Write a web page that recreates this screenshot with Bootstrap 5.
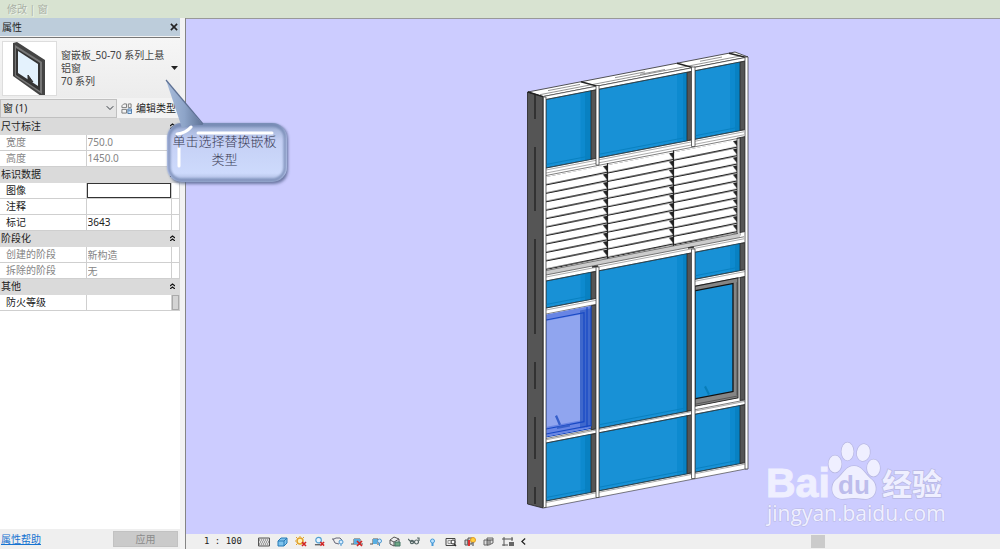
<!DOCTYPE html>
<html lang="zh-CN">
<head>
<meta charset="utf-8">
<meta name="viewport" content="width=device-width, initial-scale=1">
<title>修改 | 窗</title>
<link rel="stylesheet" href="https://cdn.jsdelivr.net/npm/bootstrap@5.3.0/dist/css/bootstrap.min.css">
<style>
  body { font: 10px/13px "Noto Sans", "Noto Sans CJK SC", sans-serif; color: #222; background: #efefef; }
  svg { display: block; }
  .ribbon { background: #d8e3d1; height: 18px; color: #a9b0a5; padding-left: 7px; text-shadow: 1px 1px 0 #eef3ea; }
  .props { width: 186px; background: #f3f3f3; border-right: 1px solid #858585; }
  .props-body { margin-right: 5px; }
  .props-title { background: #bdcddb; height: 18px; padding: 0 2px; }
  .plain-btn { border: 0; background: none; padding: 0; color: inherit; line-height: 1; }
  .type-picker { height: 61px; margin-top: 1px; border: 0; border-top: 1px solid #777; padding: 2px; gap: 4px; color: #444; background: linear-gradient(#f6f6f6, #ececec); text-align: left; }
  .thumb { background: #fff; border: 1px solid #ddd; width: 55px; height: 55px; }
  .filter-row { height: 20px; }
  .filter-row .form-select { width: 117px; height: 19px; font-size: 10px; line-height: 13px; padding: 2px; border: 1px solid #c0c0c0; border-radius: 0; background-color: #e4e4e4; background-size: 8px; background-position: right 2px center; color: #222; }
  .grid-table { table-layout: fixed; width: 100%; border-collapse: collapse; background: #fff; }
  .grid-table tr { height: 16px; }
  .grid-table th, .grid-table td { padding: 0; font-weight: 400; border: 1px solid #cfcfcf; border-width: 0 1px 1px 0; line-height: 14px; }
  .grid-table tbody th { padding-left: 6px; }
  .grid-table .group th { background: #dadada; border-color: #dadada; padding: 0 4px 0 1px; }
  .grid-table input { display: block; width: 100%; height: 15px; border: 0; padding: 0 1px; font: inherit; color: inherit; background: none; }
  .grid-table input.boxed { border: 1px solid #333; }
  .muted-row { color: #858585; }
  .grip { height: 15px; background: #d4d4d4; border: 1px solid #aaa; }
  .props-foot { height: 20px; background: #efefef; padding: 0 2px 0 1px; }
  .apply { width: 65px; height: 16px; background: #cacaca; color: #8b8b8b; border: 1px solid #c2c2c2; padding: 0; font: inherit; }
  .props-foot a { color: #1673d1; }
  .view { background: #ccccff; border-top: 1px solid #999; }
  .status { height: 15px; background: #efefef; padding-left: 18px; }
  .status .scale { font: 9px/13px "DejaVu Sans Mono", monospace; width: 54px; }
  .tools { gap: 7px; }
  .thumb-bar { width: 14px; height: 13px; background: #cbcbcb; margin-right: 175px; }
  .callout-tip { left: 162px; top: 76px; width: 130px; height: 112px; pointer-events: none; }
  .callout-tip p { inset: 57px 11px auto 6px; font: 13px/18px "Liberation Serif", "Noto Sans CJK SC", sans-serif; font-weight: 300; color: #3a3c55; white-space: nowrap; }
</style>
</head>
<body class="vh-100 d-flex flex-column overflow-hidden position-relative">
<header class="ribbon d-flex align-items-center flex-shrink-0">修改 | 窗</header>
<div class="d-flex flex-grow-1" style="min-height:0">
  <aside class="props d-flex flex-column flex-shrink-0">
    <div class="props-body d-flex flex-column flex-grow-1">
      <div class="props-title d-flex align-items-center justify-content-between">
        <span>属性</span>
        <button class="plain-btn" type="button" aria-label="关闭"><svg width="8" height="8" viewBox="0 0 9 9"><path d="M1 1l7 7M8 1L1 8" stroke="#222" stroke-width="1.8"/></svg></button>
      </div>
      <button class="type-picker d-flex align-items-center" type="button">
        <span class="thumb flex-shrink-0"><svg width="53" height="53" viewBox="0 0 53 53"><path d="M10 1l4-1 28 18v35l-4 1-28-20z" fill="#444"/><path d="M12 3l27 17v32L12 34z" fill="#777"/><path d="M13 6l24 15v28L13 33z" fill="#343434"/><path d="M15 9l20 13v22L15 31z" fill="#e4f2fd"/><path d="M25 33l5 7-5-2z" fill="#333" stroke="#333"/></svg></span>
        <span class="flex-grow-1">窗嵌板_50-70 系列上悬铝窗<br>70 系列</span>
        <svg class="flex-shrink-0" width="7" height="4" viewBox="0 0 7 4"><path d="M0 0h7L3.500 4z" fill="#222"/></svg>
      </button>
      <div class="filter-row d-flex align-items-center">
        <select class="form-select" aria-label="窗"><option>窗 (1)</option></select>
        <button class="plain-btn d-flex align-items-center gap-1 ms-1 text-nowrap" type="button"><svg width="11" height="11" viewBox="0 0 12 12" fill="none" stroke="#777"><path d="M3 1h3v4H1V3zM8 1h3v4H8zM1 7h5v4H1z"/><path d="M7.500 6.500h4v5h-4z" fill="#d4e9fb" stroke="#4475aa"/><path d="M8 8.500h3" stroke="#4475aa"/></svg>编辑类型</button>
      </div>
      <table class="grid-table">
        <colgroup><col style="width:86px"><col><col style="width:8px"></colgroup>
        <tbody>
        <tr class="group"><th colspan="3"><div class="d-flex justify-content-between align-items-center">尺寸标注<button class="plain-btn" type="button" aria-label="折叠"><svg width="5" height="6" viewBox="0 0 5 6" fill="none" stroke="#111" stroke-width="1.200"><path d="M0 3l2.500-2L5 3M0 6l2.500-2L5 6"/></svg></button></div></th></tr>
        <tr class="muted-row"><th><label for="w">宽度</label></th><td><input id="w" value="750.0" disabled></td><td></td></tr>
        <tr class="muted-row"><th><label for="h">高度</label></th><td><input id="h" value="1450.0" disabled></td><td></td></tr>
        <tr class="group"><th colspan="3"><div class="d-flex justify-content-between align-items-center">标识数据<button class="plain-btn" type="button" aria-label="折叠"><svg width="5" height="6" viewBox="0 0 5 6" fill="none" stroke="#111" stroke-width="1.200"><path d="M0 3l2.500-2L5 3M0 6l2.500-2L5 6"/></svg></button></div></th></tr>
        <tr><th><label for="img">图像</label></th><td><input id="img" class="boxed"></td><td></td></tr>
        <tr><th><label for="note">注释</label></th><td><input id="note"></td><td></td></tr>
        <tr><th><label for="tag">标记</label></th><td><input id="tag" value="3643"></td><td></td></tr>
        <tr class="group"><th colspan="3"><div class="d-flex justify-content-between align-items-center">阶段化<button class="plain-btn" type="button" aria-label="折叠"><svg width="5" height="6" viewBox="0 0 5 6" fill="none" stroke="#111" stroke-width="1.200"><path d="M0 3l2.500-2L5 3M0 6l2.500-2L5 6"/></svg></button></div></th></tr>
        <tr class="muted-row"><th><label for="made">创建的阶段</label></th><td><input id="made" value="新构造" disabled></td><td></td></tr>
        <tr class="muted-row"><th><label for="demo">拆除的阶段</label></th><td><input id="demo" value="无" disabled></td><td></td></tr>
        <tr class="group"><th colspan="3"><div class="d-flex justify-content-between align-items-center">其他<button class="plain-btn" type="button" aria-label="折叠"><svg width="5" height="6" viewBox="0 0 5 6" fill="none" stroke="#111" stroke-width="1.200"><path d="M0 3l2.500-2L5 3M0 6l2.500-2L5 6"/></svg></button></div></th></tr>
        <tr><th><label for="fire">防火等级</label></th><td><input id="fire"></td><td><div class="grip"></div></td></tr>
        </tbody>
      </table>
      <div class="flex-grow-1 bg-white"></div>
      <div class="props-foot d-flex align-items-center justify-content-between">
        <a href="#">属性帮助</a>
        <button class="apply" type="button" disabled>应用</button>
      </div>
    </div>
  </aside>

  <main class="d-flex flex-column flex-grow-1" style="min-width:0">
    <div class="view flex-grow-1" style="min-height:0">
      <svg class="w-100 h-100" viewBox="186 19 814 515" role="img" aria-label="幕墙三维视图">
        <defs>
          <pattern id="slatA" patternUnits="userSpaceOnUse" x="541" y="177" width="66" height="8.450">
            <rect width="66" height="8.450" fill="#fff"/><path d="M0 8L66 7" stroke="#222" stroke-width="1.500"/><path d="M62 0h4v6z" fill="#222"/>
          </pattern>
          <pattern id="slatB" href="#slatA" x="671"/>
        </defs>
        <!-- side face of the frame -->
        <path d="M527.500 92L543 96V508L527.500 504z" fill="#555" stroke="#222" stroke-width=".8"/>
        <path d="M535 93v26M535 147v64M535 239v95M535 362v27M535 417v42M535 487v17" stroke="#2f2f2f" stroke-width="1.800"/>
        <!-- front face, sheared to the slope of the beams -->
        <g transform="matrix(1 -.193 0 1 0 105.378)">
          <path d="M528 88.500H735L748 96H543z" fill="#fff" stroke="#333" stroke-width=".8"/>
          <path d="M540 93.500H741M548 91h32M615 91h30M640 92.500h25M700 91h22" stroke="#555" stroke-width=".6"/>
          <path d="M528 88.500L543 96M581 88.500L597 96M677 88.500L693 96M729 88.500L746 96" stroke="#222" stroke-width="1.400"/>
          <rect x="543" y="96" width="204" height="411.500" fill="#fff"/>
          <g fill="#1891d6" stroke="#14475f" stroke-width=".8">
            <path d="M546 99.500h45V168h-45zM599 99.500h88V168h-88zM695 99.500h45V168h-45z"/>
            <path d="M546 281h45v27h-45zM599 281h88v157.500h-88zM695 281h45v27h-45z"/>
            <path d="M546 443h45v58h-45zM599 443h88v58h-88zM695 443h45v58h-45z"/>
          </g>
          <path d="M580.500 100h10v68h-10zM677 100h10v68h-10zM730 100h10v68h-10zM580.500 281h10v27h-10zM677 281h10v157h-10zM730 281h10v27h-10zM580.500 443h10v58h-10zM677 443h10v58h-10zM730 443h10v58h-10z" fill="#0d8acf"/>
          <path d="M585 100h6v68h-6zM683 100h4v68h-4zM735 100h5v68h-5zM585 281h6v27h-6zM683 281h4v157h-4zM735 281h5v27h-5zM585 443h6v58h-6zM683 443h4v58h-4zM735 443h5v58h-5z" fill="#0881c2"/>
          <path d="M546 164.500h45M599 164.500h88M695 164.500h45M546 304.500h45M695 304.500h45M599 435h88M546 497.500h45M599 497.500h88M695 497.500h45" stroke="#0981c1"/>
          <!-- mullion sides -->
          <path d="M591 99.500h5V168h-5zM687 99.500h4.500V168H687zM740 99.500h5V168h-5zM591 281h5v27h-5zM687 281h4.500v157.500H687zM740 281h5v27h-5zM591 314.500h5v124h-5zM740 315h5v123h-5zM591 443h5v58h-5zM687 443h4.500v58H687zM740 443h5v58h-5zM740 175h5v95h-5z" fill="#555" stroke="#222" stroke-width=".7"/>
          <!-- louvres -->
          <rect x="546" y="177" width="61" height="93" fill="url(#slatA)"/>
          <rect x="607" y="177" width="66" height="93" fill="url(#slatA)"/>
          <rect x="673" y="177" width="64" height="93" fill="url(#slatB)"/>
          <path d="M607.500 175v96M673.500 175v96" stroke="#222" stroke-width="1.200"/>
          <path d="M737 175h3v98h-3z" fill="#ccc" stroke="#333" stroke-width=".7"/>
          <path d="M546 270.500h194v4.500H546z" fill="#ccc"/>
          <path d="M546 170h198M546 173h198M546 277h198M546 310h50M695 310h50M546 439.800h199M546 502.500h199" fill="none" stroke="#777" stroke-width=".6"/>
          <path d="M546 168h198M546 175.500h194M546 270.500h192M546 275h198M546 281h198M546 308h50M546 314h50M695 308h50M695 315h50M546 438.500h199M546 443h199M546 501h199M543 507.500h205M543 96h205M546 99.500h199" fill="none" stroke="#333" stroke-width=".6"/>
          <!-- selected sash -->
          <path d="M546 314.500h45v122h-45z" fill="#6885e4"/>
          <path d="M547 321h33v106h-33z" fill="#90a5ef"/>
          <path d="M580 317h11v118h-11z" fill="#3f68cc"/>
          <path d="M546 320h38v109h-38M587 315v120M591 315v120M546 434h45M546 437h45" fill="none" stroke="#1748c4" stroke-width="1.200"/>
          <path d="M556 417.500l4 10M557 430h13" stroke="#365fca" stroke-width="2.200"/>
          <!-- right sash -->
          <path d="M695 315h43v120h-43z" fill="#858585" stroke="#222"/>
          <path d="M695 319.500h38v108h-38z" fill="#1891d6" stroke="#111" stroke-width="1.300"/>
          <path d="M737 319v113M695 433h42" stroke="#444" stroke-width=".7"/>
          <path d="M705 417l4 9" stroke="#087db9" stroke-width="2"/>
        </g>
        <!-- front mullions -->
        <g fill="#fff" stroke="#444" stroke-width=".8">
          <path d="M543.500 97h2.500v410.500h-2.500zM596 85.500h3V165h-3zM596 267h3v230.500h-3zM691.500 67h3.500v79.500h-3.500zM691.500 249h3.500v229.500h-3.500zM745 57h3v412h-3z"/>
        </g>
        <path d="M592 267l6-1M688 248l6-1" stroke="#333" stroke-width="1.500"/>
        <!-- site watermark -->
        <g fill="#efefff" stroke="#b9b9e3" stroke-width="1.500" paint-order="stroke">
          <text x="766" y="497" font-family="Liberation Sans, sans-serif" font-weight="700" font-size="41" stroke="#efefff" stroke-width="1">Bai</text>
          <ellipse cx="835" cy="464" rx="6.500" ry="8.500"/><ellipse cx="847.500" cy="451.500" rx="6" ry="9"/><ellipse cx="863.500" cy="452.500" rx="6.500" ry="8.500" transform="rotate(10 863 452)"/><ellipse cx="873.500" cy="468" rx="6.500" ry="8.500"/>
          <path d="M854 466c8 0 10 7 17 13 7 5 7 19-5 20-5 0-7-1-12-1s-7 1-12 1c-12-1-12-15-5-20 7-6 9-13 17-13z"/>
          <text x="882" y="495" font-family="Noto Sans CJK SC, sans-serif" font-weight="700" font-size="30">经验</text>
          <text x="767" y="521" font-family="Open Sans, sans-serif" font-size="21" stroke-width="1">jingyan.baidu.com</text>
        </g>
        <text x="838" y="494" font-family="Liberation Sans, sans-serif" font-weight="700" font-size="26" fill="#bdbdec">du</text>
      </svg>
    </div>
    <div class="status d-flex align-items-center">
      <span class="scale">1 : 100</span>
      <div class="tools d-flex align-items-center">
        <svg width="12" height="10" viewBox="0 0 12 10"><path d="M.5 1h11v8H.5z" fill="#ddd" stroke="#555"/><path d="M1 3h10M2 5h10M1 7h10" stroke="#666" stroke-dasharray="1 1"/></svg>
        <svg width="11" height="10" viewBox="0 0 11 10"><path d="M1 4l3-3h6v5L7 9H1z" fill="#7fc4ee" stroke="#287bb5"/><path d="M1 4h6v5M7 4l3-3" fill="none" stroke="#287bb5"/></svg>
        <svg width="12" height="11" viewBox="0 0 12 11"><circle cx="5" cy="5" r="3" fill="#fff3bb" stroke="#e2a126" stroke-width="1.500"/><path d="M5 0v1M0 5h1M1 1l1 1M9 1L8 2M1 9l1-1" stroke="#e2a126"/><path d="M7 6l4 4M11 6l-4 4" stroke="#d02525" stroke-width="1.600"/></svg>
        <svg width="11" height="11" viewBox="0 0 12 11"><circle cx="5" cy="4" r="3" fill="#e7f5ff" stroke="#4f9ed2" stroke-width="1.300"/><path d="M1 9h6" stroke="#666" stroke-width="1.500"/><path d="M7 6l4 4M11 6l-4 4" stroke="#d02525" stroke-width="1.600"/></svg>
        <svg width="12" height="11" viewBox="0 0 12 11" fill="none"><path d="M0 3h2l2-1h4l2 2M1 3l2 4 4 1" stroke="#667"/><circle cx="9" cy="6" r="2" fill="#d7edff" stroke="#4d97cf"/><path d="M9 8v2" stroke="#4d97cf"/></svg>
        <svg width="12" height="11" viewBox="0 0 12 11"><path d="M3 8h9M0 8h3V3h6v6" fill="none" stroke="#555"/><path d="M3 3h6v5H3z" fill="#58aee2"/><path d="M6 5l5 5M11 5l-5 5" stroke="#d02525" stroke-width="1.600"/></svg>
        <svg width="12" height="11" viewBox="0 0 12 11"><path d="M0 8h3V3h5v6" fill="none" stroke="#555"/><path d="M3 3h4v5H3z" fill="#58aee2"/><circle cx="9.500" cy="5" r="2" fill="#d7edff" stroke="#4d97cf"/><path d="M9.500 7v3" stroke="#4d97cf"/></svg>
        <svg width="12" height="11" viewBox="0 0 12 11"><path d="M1 4l4-3 5 2v5l-5 2-4-2zM1 4l4 2 5-3M5 6v4" fill="#eee" stroke="#555"/><path d="M6 6h5v4H6z" fill="#6fa785" stroke="#476"/></svg>
        <svg width="12" height="9" viewBox="0 0 12 9" fill="none" stroke="#566" stroke-width="1.200"><path d="M0 2l2 2 4 1M9 1h2v3"/><circle cx="4" cy="5" r="1.600"/><circle cx="8.500" cy="5" r="2"/></svg>
        <svg width="11" height="10" viewBox="0 0 11 10"><circle cx="5.500" cy="4" r="2" fill="#b9e1ff" stroke="#4799d7"/><path d="M5.500 6v3" stroke="#4799d7" stroke-width="2"/></svg>
        <svg width="12" height="10" viewBox="0 0 12 10"><path d="M1 1.500h9v7H1z" fill="#eee" stroke="#444"/><path d="M3 3.500h4v3H3z" fill="none" stroke="#999"/><circle cx="8" cy="5" r="2" fill="#fff" stroke="#333"/><path d="M9 7l2 2" stroke="#333" stroke-width="1.500"/></svg>
        <svg width="12" height="11" viewBox="0 0 12 11"><path d="M1 4h3v5H1zM4 2h4v6H4z" fill="#ccc" stroke="#555"/><path d="M4 4h2v6H4z" fill="#d33"/><circle cx="9" cy="4" r="2.500" fill="#ffd13e" stroke="#e39a22"/><path d="M9 6v4" stroke="#777" stroke-width="1.500"/></svg>
        <svg width="12" height="11" viewBox="0 0 12 11"><path d="M1 4h4v5H1zM4 2h6v5l-4 2H4z" fill="#ddd" stroke="#666"/><path d="M7 4v4M4 4h6" stroke="#555"/></svg>
        <svg width="12" height="10" viewBox="0 0 12 10"><path d="M0 2h11M2 0v9M0 8h6M10 0v4" fill="none" stroke="#555"/><path d="M7 5h5v4H7z" fill="#666"/></svg>
        <svg width="5" height="9" viewBox="0 0 6 9"><path d="M5 1L1 4.500 5 8" fill="none" stroke="#222" stroke-width="1.500"/></svg>
      </div>
      <div class="thumb-bar ms-auto"></div>
    </div>
  </main>
</div>

<div class="callout-tip position-absolute" role="tooltip">
  <svg width="130" height="112" viewBox="0 0 130 112">
    <defs>
      <linearGradient id="bubble" x1="0" y1="0" x2="0" y2="1"><stop offset="0" stop-color="#7f94bb"/><stop offset=".12" stop-color="#a9b9de"/><stop offset=".3" stop-color="#c5d0f5"/><stop offset=".85" stop-color="#cddafc"/><stop offset="1" stop-color="#a3b3d8"/></linearGradient>
      <linearGradient id="tail" x1="0" y1="0" x2="1" y2="0"><stop offset="0" stop-color="#a9bddb"/><stop offset=".5" stop-color="#8da4c8"/><stop offset="1" stop-color="#5f7396"/></linearGradient>
      <filter id="soft" x="-20%" y="-20%" width="140%" height="140%"><feGaussianBlur stdDeviation="1.500"/></filter>
      <filter id="edge" x="-20%" y="-20%" width="140%" height="140%"><feGaussianBlur stdDeviation="1"/></filter>
    </defs>
    <path d="M18 49h92q16 0 16 15v28q0 16-16 16H22q-14 0-14-14V62q0-13 10-13z" fill="#45547c" opacity=".7" filter="url(#soft)"/>
    <rect x="5" y="47" width="120" height="59" rx="15" fill="url(#bubble)"/>
    <rect x="7" y="49" width="116" height="55" rx="13" fill="none" stroke="#6f83ae" stroke-width="3" opacity=".8" filter="url(#edge)"/>
    <path d="M4 4L41 49H28l-8 3z" fill="url(#tail)"/>
    <path d="M4 4L41 48" stroke="#5d7093" stroke-width="1.200"/>
    <path d="M36 57h74M17 72v18M15 58q9-1 14-7" fill="none" stroke="#fff" stroke-width="3" stroke-linecap="round" filter="url(#glow)"/>
  </svg>
  <p class="position-absolute text-center mb-0">单击选择替换嵌板<br>类型</p>
</div>
<script src="https://cdn.jsdelivr.net/npm/bootstrap@5.3.0/dist/js/bootstrap.bundle.min.js"></script>
</body>
</html>
